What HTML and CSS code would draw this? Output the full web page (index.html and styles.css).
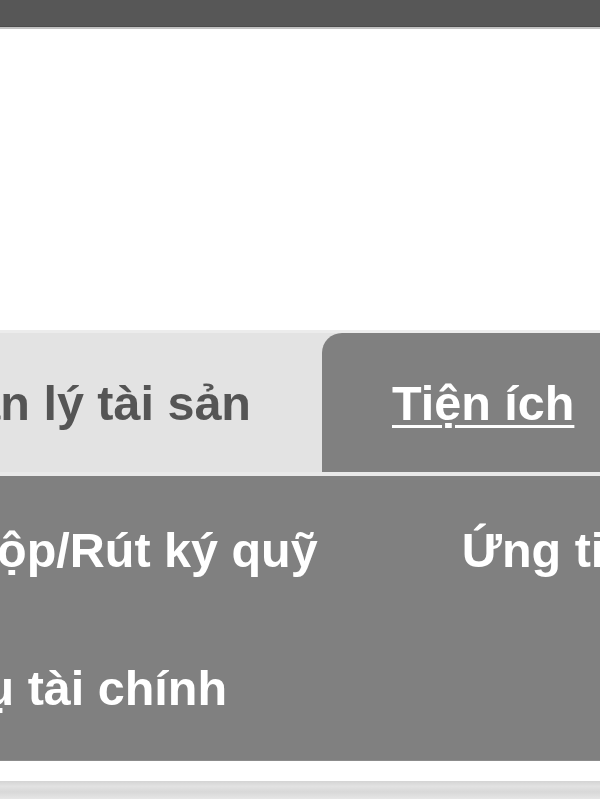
FILE: index.html
```html
<!DOCTYPE html>
<html>
<head>
  <title>Tiện ích</title>
  <link rel="stylesheet" href="styles.css">
</head>
<body>
  <div class="top-bar"></div>
  <div class="banner"></div>
  <div class="tabs">
    <div class="tab">Quản lý tài sản</div>
    <div class="tab active"><span>Tiện ích</span></div>
  </div>
  <div class="tab-divider"></div>
  <div class="panel">
    <div class="panel-row first-row">
      <div class="panel-item">Nộp/Rút ký quỹ</div>
      <div class="panel-item">Ứng tiền bán</div>
    </div>
    <div class="panel-row second-row">
      <div class="panel-item">Dịch vụ tài chính</div>
    </div>
  </div>
  <div class="bottom-space"></div>
  <div class="bottom-bar"></div>
</body>
</html>
```

FILE: styles.css
```css
/* page */
body {
  font-family: "Liberation Sans", Arial, sans-serif;
  font-weight: bold;
  background-color: #fff;
  margin: 0;
  width: 600px;
  height: 800px;
  overflow: hidden;
}

.top-bar {
  background-color: #575757;
  height: 26px;
  border-bottom: 1px solid #4c4c4c;
  box-shadow: 0 2px 0 #c2c2c2;
}

.banner {
  height: 303px;
}

/* tabs */
.tabs {
  display: flex;
  height: 139px;
  background-color: #e3e3e3;
  border-top: 3px solid #ececec;
  font-size: 48.5px;
  line-height: 56px;
}

.tab {
  flex: none;
  width: 322px;
  display: flex;
  align-items: center;
  justify-content: flex-end;
  padding-right: 71px;
  box-sizing: border-box;
  color: #555;
  white-space: nowrap;
}

.tab.active {
  flex: 1;
  justify-content: flex-start;
  padding-left: 70px;
  padding-right: 0;
  background-color: #808080;
  border-top-left-radius: 20px;
  color: #fff;
}

.tab.active span {
  text-decoration: underline;
  text-decoration-thickness: 3px;
  text-underline-offset: 5px;
}

.tab-divider {
  height: 4px;
  background-color: #e9e9e9;
}

/* utilities panel */
.panel {
  background-color: #808080;
  height: 285px;
  box-sizing: border-box;
  padding-top: 46px;
  border-bottom: 1px solid #8c8c8c;
  color: #fff;
  font-size: 48.5px;
  line-height: 56px;
}

.panel-row {
  display: flex;
  white-space: nowrap;
}

.first-row {
  margin-left: -38px;
  gap: 144px;
}

.second-row {
  margin-top: 82px;
  margin-left: -161px;
}

.bottom-space {
  height: 20px;
}

.bottom-bar {
  height: 18px;
  background: linear-gradient(#d4d4d4, #e2e2e2 30%, #d8d8d8 60%, #e6e6e6);
}
```
